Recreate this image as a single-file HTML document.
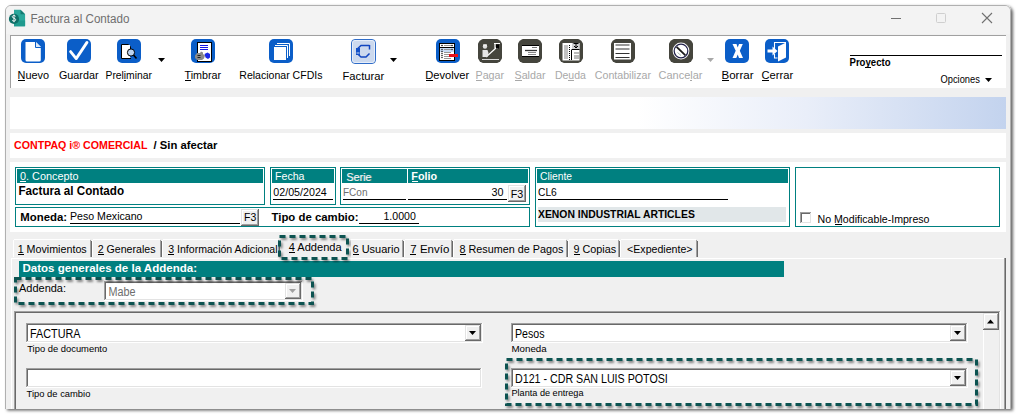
<!DOCTYPE html><html><head><meta charset="utf-8"><style>html,body{margin:0;padding:0;background:#fff;overflow:hidden}svg{display:block}text{font-family:"Liberation Sans",sans-serif}</style></head><body><svg width="1020" height="418" viewBox="0 0 1020 418" font-family="Liberation Sans, sans-serif">
<defs><filter id="sh" x="-5%" y="-20%" width="110%" height="140%"><feDropShadow dx="1.5" dy="2" stdDeviation="1.3" flood-color="#000" flood-opacity="0.45"/></filter><linearGradient id="gb" x1="0" x2="1" y1="0" y2="0"><stop offset="0" stop-color="#fff"/><stop offset="0.63" stop-color="#fff"/><stop offset="0.8" stop-color="#e9eef9"/><stop offset="1" stop-color="#c3d3ee"/></linearGradient><filter id="wsh" x="-2%" y="-2%" width="104%" height="104%"><feDropShadow dx="2" dy="1.5" stdDeviation="1.4" flood-color="#000" flood-opacity="0.6"/></filter></defs>
<rect x="0" y="0" width="1020" height="418" fill="#ffffff" />
<path d="M5 409V11a6 6 0 0 1 6-6h994a6 6 0 0 1 6 6v398z" fill="#f0f0f0" filter="url(#wsh)"/>
<path d="M5.5 409V11a5.5 5.5 0 0 1 5.5-5.5h994a5.5 5.5 0 0 1 5.5 5.5v398" fill="none" stroke="#b0b0b0" stroke-width="1"/>
<path d="M6 34V11a5 5 0 0 1 5-5h994a5 5 0 0 1 5 5v23z" fill="#f3f3f3"/>
<g transform="translate(9 9)">
<path d="M5 0.7h6.5l4.6 4.6v11.2a0.8 0.8 0 0 1-0.8 0.8H5z" fill="#2aa89c"/>
<path d="M11.5 0.7l4.6 4.6h-4.6z" fill="#157a72"/>
<rect x="5" y="11.5" width="11.1" height="5.8" fill="#1f9a8e"/>
<circle cx="5" cy="9.9" r="5.1" fill="#0f6f68"/>
<path d="M6.6 7.3c-0.4-0.6-1-0.8-1.7-0.8-0.9 0-1.6 0.5-1.6 1.3 0 1.7 3.4 1 3.4 2.9 0 0.9-0.8 1.4-1.8 1.4-0.8 0-1.4-0.3-1.8-0.9M5 5.6v7.6" fill="none" stroke="#fff" stroke-width="0.9"/>
</g>
<text x="30.5" y="23" font-size="12" font-weight="normal" fill="#6f6f6f" textLength="99" lengthAdjust="spacingAndGlyphs" >Factura al Contado</text>
<rect x="891" y="18" width="10" height="1" fill="#707070" />
<rect x="936.5" y="13.5" width="9" height="9" fill="none" stroke="#cfcfcf" rx="1"/>
<path d="M982 13l10 10M992 13l-10 10" stroke="#707070" stroke-width="1.1"/>
<rect x="10" y="35" width="996" height="53" fill="#ffffff" />
<rect x="10" y="35" width="996" height="1" fill="#a0a0a0" />
<rect x="10" y="35" width="1" height="53" fill="#a0a0a0" />
<g transform="translate(21 39)"><rect x="0" y="0" width="24" height="24" rx="5" fill="#0b5ec8"/><path d="M4.5 3h10.5l4.8 4.8v13.2a1.5 1.5 0 0 1-1.5 1.5H6a1.5 1.5 0 0 1-1.5-1.5z" fill="#fff"/><path d="M14.5 3v5.5h5.5" fill="#dde9f8" stroke="#0b5ec8" stroke-width="1"/></g><g transform="translate(67 39)"><rect x="0" y="0" width="24" height="24" rx="5" fill="#0b5ec8"/><path d="M3.6 12.6l5.6 7L20 3.4" fill="none" stroke="#fff" stroke-width="2.8" stroke-linecap="round" stroke-linejoin="round"/></g><g transform="translate(117 39)"><rect x="0" y="0" width="24" height="24" rx="5" fill="#0b5ec8"/><path d="M4.5 5.5h7l2 2v3M4.5 5.5v14h9.5" fill="#fff" stroke="#000" stroke-width="1"/><rect x="5" y="6" width="8" height="13" fill="#fff"/><circle cx="14" cy="13.5" r="3.6" fill="#bcd3f0" stroke="#000" stroke-width="1"/><path d="M16.5 16l3 3.5" stroke="#000" stroke-width="1.6"/></g><g transform="translate(191 39)"><rect x="0" y="0" width="24" height="24" rx="5" fill="#0b5ec8"/><rect x="6.5" y="3.5" width="14" height="19" fill="#fff" stroke="#000"/><path d="M9 6.5h8M9 8.5h8M9 10.5h8" stroke="#1414e6" stroke-width="1" shape-rendering="crispEdges"/><path d="M4 16.5l2-2.5h3l1-1.5 2 1v1.5l2 1.5-1 3-2 1.5h-5l-2-2z" fill="#8a8a8a"/><path d="M6.5 16.5h3M6.5 18.5h3" stroke="#222" stroke-width="1"/><path d="M13.5 15l3-1.5 2.5 1.5 0 3.5-2 1.5-2.5-1.5z" fill="#1a28e8"/></g><g transform="translate(269 39)"><rect x="0" y="0" width="24" height="24" rx="5" fill="#0b5ec8"/><path d="M8 4.5h12.5V17" fill="none" stroke="#fff" stroke-width="1"/><path d="M6 6.5h12.5V19" fill="none" stroke="#fff" stroke-width="1"/><path d="M5 8h12v13H5z" fill="#fff"/></g><g transform="translate(351 39)"><rect x="0.5" y="0.5" width="24" height="24" rx="3.5" fill="#ccd9ee" stroke="#2f6cc8"/><rect x="1.5" y="1.5" width="22" height="22" rx="2.5" fill="none" stroke="#e6eefa" stroke-width="1"/><path d="M18.5 6v4.5M18.5 6.5H10L6.2 10v4.5L10 18h5l3.5-3.5" fill="none" stroke="#1246c0" stroke-width="1.5"/><rect x="5" y="9" width="4" height="7" fill="#1250c8"/><path d="M5.5 14h3" stroke="#fff" stroke-width="0.8"/></g><g transform="translate(436 39)"><rect x="0" y="0" width="24" height="24" rx="5" fill="#0b5ec8"/><rect x="3.5" y="4.5" width="15" height="17" fill="#fff" stroke="#000"/><path d="M4 8.5h14" stroke="#000" stroke-width="1"/><rect x="4" y="9" width="14" height="4" fill="#c8dcf6"/><g fill="#000"><circle cx="6" cy="6.5" r="0.8"/><circle cx="16" cy="6.5" r="0.8"/><circle cx="6" cy="10.5" r="0.7"/><circle cx="6" cy="12.5" r="0.7"/><circle cx="6" cy="14.5" r="0.7"/><circle cx="6" cy="16.5" r="0.7"/><circle cx="6" cy="18.5" r="0.7"/><circle cx="16" cy="10.5" r="0.7"/></g><path d="M8 6.5h7M8 10.5h7M8 13.5h7M8 15.5h7M8 17.5h7M8 19.5h7" stroke="#8a8a8a" stroke-width="0.9"/><rect x="13" y="15" width="9" height="3" fill="#e8101a"/></g><g transform="translate(478 39)"><path d="M5 0h14l5 5v14l-5 5H5l-5-5V5z" fill="#45453d"/><rect x="0" y="0" width="24" height="24" rx="6" fill="#45453d"/><path d="M4 20.5h17" stroke="#d8d8d8" stroke-width="1"/><path d="M8 18l10-9" stroke="#fff" stroke-width="1.2"/><circle cx="7" cy="7.5" r="2.2" fill="#e0e0e0"/><path d="M5 6h4" stroke="#fff"/><path d="M4.5 11h5l1 3-1 4H4.5z" fill="#e6e6e6"/><path d="M16 4.5h6M17 5v4h3" fill="none" stroke="#fff" stroke-width="1.2"/><path d="M18 5.5h3v4h-3z" fill="#000"/></g><g transform="translate(518 39)"><path d="M5 0h14l5 5v14l-5 5H5l-5-5V5z" fill="#45453d"/><rect x="0" y="0" width="24" height="24" rx="6" fill="#45453d"/><rect x="4" y="6" width="17" height="12" fill="#fff"/><path d="M4 6.5h17M4 17.5h17" stroke="#000"/><path d="M14 8.5h5" stroke="#777"/><path d="M7 11.5h12" stroke="#333" stroke-width="1.3"/><path d="M10 13.5h8M10 15.5h8" stroke="#888"/></g><g transform="translate(559 39)"><path d="M5 0h14l5 5v14l-5 5H5l-5-5V5z" fill="#45453d"/><rect x="0" y="0" width="24" height="24" rx="6" fill="#45453d"/><rect x="3.5" y="4" width="17" height="17.5" fill="#fff"/><rect x="13" y="4" width="7.5" height="6" fill="#d0d0d0"/><path d="M5 7h4M5 9h4M5 11h4M5 13h4M5 15h4M5 17h4M5 19h4" stroke="#777" stroke-width="0.9"/><path d="M10.5 6v15" stroke="#000" stroke-dasharray="1 1"/><path d="M12.5 11v10M12.5 10.5h8" stroke="#000"/><path d="M15 14h5M15 17h5M15 19h5" stroke="#777"/><path d="M17 4.5v4M15 7l2 2 2-2" stroke="#000" fill="none"/><path d="M14.5 4.5h5" stroke="#000"/></g><g transform="translate(611 39)"><path d="M5 0h14l5 5v14l-5 5H5l-5-5V5z" fill="#45453d"/><rect x="0" y="0" width="24" height="24" rx="6" fill="#45453d"/><rect x="3" y="4" width="17" height="16.5" fill="#fff"/><path d="M4.5 6h14" stroke="#999" stroke-width="2"/><path d="M4.5 10h14M4.5 14.5h14M4.5 18.5h14" stroke="#333" stroke-width="1.2"/></g><g transform="translate(669 39)"><path d="M5 0h14l5 5v14l-5 5H5l-5-5V5z" fill="#45453d"/><rect x="0" y="0" width="24" height="24" rx="6" fill="#45453d"/><circle cx="12" cy="12" r="8.4" fill="#f4f4f4"/><circle cx="12" cy="12" r="6.8" fill="#fff" stroke="#20204a" stroke-width="1.2"/><path d="M7.6 7.8l8.8 8.6" stroke="#1a1a1a" stroke-width="1.8"/><path d="M8.5 13.5l3.5 3" stroke="#a8b8b0" stroke-width="1"/></g><g transform="translate(725 39)"><rect x="0" y="0" width="24" height="24" rx="5" fill="#0b5ec8"/><path d="M7.5 5h4l1.2 3.5L14 5h3.8l-3 6.8 3.2 7.2h-4l-1.3-3.6-1.4 3.6H7.5l3.2-7.2z" fill="#fff"/></g><g transform="translate(765 39)"><rect x="0" y="0" width="24" height="24" rx="5" fill="#0b5ec8"/><path d="M9.5 10V3.5H21" fill="none" stroke="#fff" stroke-width="1.1"/><path d="M9.5 15v4h3" fill="none" stroke="#fff" stroke-width="1.1"/><path d="M13 7.5l8-4v15l-8 4z" fill="#fff"/><path d="M2.5 10.5h5v-3l5 4.5-5 4.5v-3h-5z" fill="#fff"/></g>
<text x="17.6" y="78.8" font-size="11" font-weight="normal" fill="#000" textLength="31.5" lengthAdjust="spacingAndGlyphs" >Nuevo</text>
<text x="59.0" y="78.8" font-size="11" font-weight="normal" fill="#000" textLength="39.5" lengthAdjust="spacingAndGlyphs" >Guardar</text>
<text x="105.5" y="78.8" font-size="11" font-weight="normal" fill="#000" textLength="46.4" lengthAdjust="spacingAndGlyphs" >Preliminar</text>
<text x="184.5" y="78.8" font-size="11" font-weight="normal" fill="#000" textLength="36.6" lengthAdjust="spacingAndGlyphs" >Timbrar</text>
<text x="239.3" y="78.8" font-size="11" font-weight="normal" fill="#000" textLength="83.2" lengthAdjust="spacingAndGlyphs" >Relacionar CFDIs</text>
<text x="342.5" y="80" font-size="11" font-weight="normal" fill="#000" textLength="41.7" lengthAdjust="spacingAndGlyphs" >Facturar</text>
<text x="425.3" y="78.8" font-size="11" font-weight="normal" fill="#000" textLength="43.9" lengthAdjust="spacingAndGlyphs" >Devolver</text>
<text x="475.5" y="78.8" font-size="11" font-weight="normal" fill="#a8a8a8" textLength="28.6" lengthAdjust="spacingAndGlyphs" >Pagar</text>
<text x="514.5" y="78.8" font-size="11" font-weight="normal" fill="#a8a8a8" textLength="31" lengthAdjust="spacingAndGlyphs" >Saldar</text>
<text x="554.9" y="78.8" font-size="11" font-weight="normal" fill="#a8a8a8" textLength="31" lengthAdjust="spacingAndGlyphs" >Deuda</text>
<text x="594.8" y="78.8" font-size="11" font-weight="normal" fill="#a8a8a8" textLength="56.2" lengthAdjust="spacingAndGlyphs" >Contabilizar</text>
<text x="658.5" y="78.8" font-size="11" font-weight="normal" fill="#a8a8a8" textLength="44" lengthAdjust="spacingAndGlyphs" >Cancelar</text>
<text x="721.5" y="78.8" font-size="11" font-weight="normal" fill="#000" textLength="32" lengthAdjust="spacingAndGlyphs" >Borrar</text>
<text x="761.5" y="78.8" font-size="11" font-weight="normal" fill="#000" textLength="31.6" lengthAdjust="spacingAndGlyphs" >Cerrar</text>
<rect x="18" y="80" width="7" height="1" fill="#000" />
<rect x="124" y="80" width="2" height="1" fill="#000" />
<rect x="185" y="80" width="6" height="1" fill="#000" />
<rect x="426" y="80" width="7" height="1" fill="#000" />
<rect x="476" y="80" width="6" height="1" fill="#a8a8a8" />
<rect x="515" y="80" width="7" height="1" fill="#a8a8a8" />
<rect x="568" y="80" width="6" height="1" fill="#a8a8a8" />
<rect x="690" y="80" width="2" height="1" fill="#a8a8a8" />
<rect x="722" y="80" width="7" height="1" fill="#000" />
<rect x="762" y="80" width="7" height="1" fill="#000" />
<path d="M158.0 58h7l-3.5 4z" fill="#000"/>
<path d="M390.0 58h7l-3.5 4z" fill="#000"/>
<path d="M707.0 58h7l-3.5 4z" fill="#a8a8a8"/>
<rect x="850" y="55" width="152" height="1" fill="#000" />
<text x="849.5" y="66" font-size="10" font-weight="bold" fill="#000" textLength="41" lengthAdjust="spacingAndGlyphs" >Proyecto</text>
<rect x="865" y="67" width="6" height="1" fill="#000" />
<text x="940.5" y="83" font-size="11" font-weight="normal" fill="#000" textLength="39.4" lengthAdjust="spacingAndGlyphs" >Opciones</text>
<path d="M985.0 78h7l-3.5 4z" fill="#000"/>
<rect x="10" y="97" width="996" height="32" fill="url(#gb)" />
<rect x="10" y="133" width="996" height="25" fill="#ffffff" />
<text x="14" y="149" font-size="11" font-weight="bold" fill="#ff0000" textLength="133.5" lengthAdjust="spacingAndGlyphs" >CONTPAQ i® COMERCIAL</text>
<text x="153.5" y="149" font-size="11" font-weight="bold" fill="#000" textLength="64" lengthAdjust="spacingAndGlyphs" >/ Sin afectar</text>
<rect x="10" y="162" width="996" height="70" fill="#ffffff" />
<rect x="15.5" y="167.5" width="249" height="37" fill="#fff" stroke="#008080"/>
<rect x="17" y="169" width="246" height="14" fill="#008080" />
<text x="20" y="180" font-size="11" font-weight="normal" fill="#fff" textLength="58.5" lengthAdjust="spacingAndGlyphs" >0. Concepto</text>
<rect x="20" y="181" width="6" height="1" fill="#fff" />
<text x="18.5" y="195" font-size="12" font-weight="bold" fill="#000" textLength="105.5" lengthAdjust="spacingAndGlyphs" >Factura al Contado</text>
<rect x="15.5" y="207.5" width="514" height="19" fill="#fff" stroke="#008080"/>
<text x="20.3" y="220.5" font-size="11" font-weight="bold" fill="#000" textLength="46.8" lengthAdjust="spacingAndGlyphs" >Moneda:</text>
<text x="70" y="220" font-size="11" font-weight="normal" fill="#000" textLength="72.5" lengthAdjust="spacingAndGlyphs" >Peso Mexicano</text>
<rect x="70" y="223" width="170" height="1" fill="#000" />
<rect x="241" y="209" width="18" height="17" fill="#f0f0f0" />
<rect x="241" y="209" width="18" height="1" fill="#e3e3e3" />
<rect x="241" y="209" width="1" height="17" fill="#e3e3e3" />
<rect x="242" y="210" width="16" height="1" fill="#ffffff" />
<rect x="242" y="210" width="1" height="15" fill="#ffffff" />
<rect x="241" y="225" width="18" height="1" fill="#696969" />
<rect x="258" y="209" width="1" height="17" fill="#696969" />
<rect x="242" y="224" width="16" height="1" fill="#a0a0a0" />
<rect x="257" y="210" width="1" height="15" fill="#a0a0a0" />
<text x="244" y="221" font-size="11" font-weight="normal" fill="#000" textLength="12.2" lengthAdjust="spacingAndGlyphs" >F3</text>
<text x="271.5" y="221.2" font-size="11" font-weight="bold" fill="#000" textLength="87" lengthAdjust="spacingAndGlyphs" >Tipo de cambio:</text>
<rect x="359" y="223" width="60" height="1" fill="#000" />
<text x="383.5" y="220" font-size="11" font-weight="normal" fill="#000" textLength="32.3" lengthAdjust="spacingAndGlyphs" >1.0000</text>
<rect x="270.5" y="167.5" width="65" height="37" fill="#fff" stroke="#008080"/>
<rect x="272" y="169" width="62" height="14" fill="#008080" />
<text x="275" y="180" font-size="11" font-weight="normal" fill="#fff" textLength="29.5" lengthAdjust="spacingAndGlyphs" >Fecha</text>
<text x="273.3" y="195.5" font-size="11" font-weight="normal" fill="#000" textLength="53.5" lengthAdjust="spacingAndGlyphs" >02/05/2024</text>
<rect x="273" y="199" width="60" height="1" fill="#000" />
<rect x="340.5" y="167.5" width="189" height="37" fill="#fff" stroke="#008080"/>
<rect x="342" y="169" width="65" height="14" fill="#008080" />
<rect x="408" y="169" width="120" height="14" fill="#008080" />
<text x="347.2" y="181.2" font-size="11" font-weight="normal" fill="#7fa8a8" textLength="25" lengthAdjust="spacingAndGlyphs" >Serie</text>
<text x="346.3" y="180.5" font-size="11" font-weight="normal" fill="#f4f8f8" textLength="25" lengthAdjust="spacingAndGlyphs" >Serie</text>
<text x="343" y="195.5" font-size="11" font-weight="normal" fill="#6d6d6d" textLength="24.5" lengthAdjust="spacingAndGlyphs" >FCon</text>
<rect x="343" y="199" width="63" height="1" fill="#000" />
<text x="411.3" y="180" font-size="11" font-weight="bold" fill="#fff" textLength="25.8" lengthAdjust="spacingAndGlyphs" >Folio</text>
<rect x="412" y="181" width="6" height="1" fill="#fff" />
<text x="491.5" y="195.5" font-size="11" font-weight="normal" fill="#000" textLength="12" lengthAdjust="spacingAndGlyphs" >30</text>
<rect x="408" y="199" width="99" height="1" fill="#000" />
<rect x="508" y="185" width="18" height="17" fill="#f0f0f0" />
<rect x="508" y="185" width="18" height="1" fill="#e3e3e3" />
<rect x="508" y="185" width="1" height="17" fill="#e3e3e3" />
<rect x="509" y="186" width="16" height="1" fill="#ffffff" />
<rect x="509" y="186" width="1" height="15" fill="#ffffff" />
<rect x="508" y="201" width="18" height="1" fill="#696969" />
<rect x="525" y="185" width="1" height="17" fill="#696969" />
<rect x="509" y="200" width="16" height="1" fill="#a0a0a0" />
<rect x="524" y="186" width="1" height="15" fill="#a0a0a0" />
<text x="510.8" y="197.5" font-size="11" font-weight="normal" fill="#000" textLength="12.5" lengthAdjust="spacingAndGlyphs" >F3</text>
<rect x="535.5" y="167.5" width="254" height="59" fill="#fff" stroke="#008080"/>
<rect x="537" y="169" width="251" height="14" fill="#008080" />
<text x="540" y="180" font-size="11" font-weight="normal" fill="#fff" textLength="32" lengthAdjust="spacingAndGlyphs" >Cliente</text>
<text x="538" y="196" font-size="11" font-weight="normal" fill="#000" textLength="18.8" lengthAdjust="spacingAndGlyphs" >CL6</text>
<rect x="538" y="199" width="190" height="1" fill="#000" />
<rect x="538" y="207" width="248" height="15" fill="#e1e7e9" />
<text x="538" y="217.6" font-size="11" font-weight="bold" fill="#000" textLength="156.8" lengthAdjust="spacingAndGlyphs" >XENON INDUSTRIAL ARTICLES</text>
<rect x="795.5" y="167.5" width="204" height="59" fill="#fff" stroke="#008080"/>
<rect x="800" y="212" width="12" height="12" fill="#fff" />
<rect x="800" y="212" width="12" height="1" fill="#a0a0a0" />
<rect x="800" y="212" width="1" height="12" fill="#a0a0a0" />
<rect x="801" y="213" width="10" height="1" fill="#696969" />
<rect x="801" y="213" width="1" height="10" fill="#696969" />
<rect x="800" y="223" width="12" height="1" fill="#ffffff" />
<rect x="811" y="212" width="1" height="12" fill="#ffffff" />
<rect x="801" y="222" width="10" height="1" fill="#e3e3e3" />
<rect x="810" y="213" width="1" height="10" fill="#e3e3e3" />
<text x="817.5" y="223" font-size="11" font-weight="normal" fill="#000" textLength="112" lengthAdjust="spacingAndGlyphs" >No Modificable-Impreso</text>
<rect x="835" y="224" width="7" height="1" fill="#000" />
<rect x="13" y="239" width="79" height="18" fill="#f0f0f0" />
<rect x="14" y="239" width="76" height="1" fill="#ffffff" />
<rect x="13" y="240" width="1" height="17" fill="#ffffff" />
<rect x="90" y="240" width="1" height="17" fill="#a0a0a0" />
<rect x="91" y="241" width="1" height="16" fill="#696969" />
<text x="17.7" y="252.6" font-size="11" font-weight="normal" fill="#000" textLength="69" lengthAdjust="spacingAndGlyphs" >1 Movimientos</text>
<rect x="18" y="254" width="6" height="1" fill="#000" />
<rect x="92" y="239" width="70" height="18" fill="#f0f0f0" />
<rect x="93" y="239" width="67" height="1" fill="#ffffff" />
<rect x="92" y="240" width="1" height="17" fill="#ffffff" />
<rect x="160" y="240" width="1" height="17" fill="#a0a0a0" />
<rect x="161" y="241" width="1" height="16" fill="#696969" />
<text x="97.7" y="252.6" font-size="11" font-weight="normal" fill="#000" textLength="57.8" lengthAdjust="spacingAndGlyphs" >2 Generales</text>
<rect x="98" y="254" width="6" height="1" fill="#000" />
<rect x="162" y="239" width="118" height="18" fill="#f0f0f0" />
<rect x="163" y="239" width="115" height="1" fill="#ffffff" />
<rect x="162" y="240" width="1" height="17" fill="#ffffff" />
<rect x="278" y="240" width="1" height="17" fill="#a0a0a0" />
<rect x="279" y="241" width="1" height="16" fill="#696969" />
<text x="168.2" y="252.6" font-size="11" font-weight="normal" fill="#000" textLength="109.3" lengthAdjust="spacingAndGlyphs" >3 Información Adicional</text>
<rect x="168" y="254" width="6" height="1" fill="#000" />
<rect x="349" y="239" width="55" height="18" fill="#f0f0f0" />
<rect x="350" y="239" width="52" height="1" fill="#ffffff" />
<rect x="349" y="240" width="1" height="17" fill="#ffffff" />
<rect x="402" y="240" width="1" height="17" fill="#a0a0a0" />
<rect x="403" y="241" width="1" height="16" fill="#696969" />
<text x="352.5" y="252.6" font-size="11" font-weight="normal" fill="#000" textLength="47" lengthAdjust="spacingAndGlyphs" >6 Usuario</text>
<rect x="353" y="254" width="6" height="1" fill="#000" />
<rect x="404" y="239" width="49" height="18" fill="#f0f0f0" />
<rect x="405" y="239" width="46" height="1" fill="#ffffff" />
<rect x="404" y="240" width="1" height="17" fill="#ffffff" />
<rect x="451" y="240" width="1" height="17" fill="#a0a0a0" />
<rect x="452" y="241" width="1" height="16" fill="#696969" />
<text x="410.3" y="252.6" font-size="11" font-weight="normal" fill="#000" textLength="39" lengthAdjust="spacingAndGlyphs" >7 Envío</text>
<rect x="410" y="254" width="6" height="1" fill="#000" />
<rect x="453" y="239" width="115" height="18" fill="#f0f0f0" />
<rect x="454" y="239" width="112" height="1" fill="#ffffff" />
<rect x="453" y="240" width="1" height="17" fill="#ffffff" />
<rect x="566" y="240" width="1" height="17" fill="#a0a0a0" />
<rect x="567" y="241" width="1" height="16" fill="#696969" />
<text x="459.5" y="252.6" font-size="11" font-weight="normal" fill="#000" textLength="103.8" lengthAdjust="spacingAndGlyphs" >8 Resumen de Pagos</text>
<rect x="460" y="254" width="6" height="1" fill="#000" />
<rect x="568" y="239" width="52" height="18" fill="#f0f0f0" />
<rect x="569" y="239" width="49" height="1" fill="#ffffff" />
<rect x="568" y="240" width="1" height="17" fill="#ffffff" />
<rect x="618" y="240" width="1" height="17" fill="#a0a0a0" />
<rect x="619" y="241" width="1" height="16" fill="#696969" />
<text x="573.5" y="252.6" font-size="11" font-weight="normal" fill="#000" textLength="42.7" lengthAdjust="spacingAndGlyphs" >9 Copias</text>
<rect x="574" y="254" width="6" height="1" fill="#000" />
<rect x="620" y="239" width="78" height="18" fill="#f0f0f0" />
<rect x="621" y="239" width="75" height="1" fill="#ffffff" />
<rect x="620" y="240" width="1" height="17" fill="#ffffff" />
<rect x="696" y="240" width="1" height="17" fill="#a0a0a0" />
<rect x="697" y="241" width="1" height="16" fill="#696969" />
<text x="627.1" y="252.6" font-size="11" font-weight="normal" fill="#000" textLength="65.4" lengthAdjust="spacingAndGlyphs" >&lt;Expediente&gt;</text>
<rect x="280" y="237" width="67" height="21" fill="#f0f0f0" />
<text x="288.7" y="250.8" font-size="11" font-weight="normal" fill="#000" textLength="53" lengthAdjust="spacingAndGlyphs" >4 Addenda</text>
<rect x="289" y="252" width="6" height="1" fill="#000" />
<rect x="11" y="257" width="995" height="152" fill="#f0f0f0" />
<rect x="11" y="258" width="995" height="1" fill="#ffffff" />
<rect x="11" y="258" width="1" height="151" fill="#ffffff" />
<rect x="1004" y="258" width="1" height="151" fill="#a0a0a0" />
<rect x="1005" y="258" width="1" height="151" fill="#696969" />
<rect x="19" y="261" width="765" height="16" fill="#008080" />
<text x="22.5" y="272.2" font-size="11" font-weight="bold" fill="#fff" textLength="174.5" lengthAdjust="spacingAndGlyphs" >Datos generales de la Addenda:</text>
<text x="19" y="291.7" font-size="11" font-weight="normal" fill="#000" textLength="47" lengthAdjust="spacingAndGlyphs" >Addenda:</text>
<rect x="104" y="281" width="199" height="20" fill="#fff" />
<rect x="104" y="281" width="199" height="1" fill="#a0a0a0" />
<rect x="104" y="281" width="1" height="20" fill="#a0a0a0" />
<rect x="105" y="282" width="197" height="1" fill="#696969" />
<rect x="105" y="282" width="1" height="18" fill="#696969" />
<rect x="104" y="300" width="199" height="1" fill="#ffffff" />
<rect x="302" y="281" width="1" height="20" fill="#ffffff" />
<rect x="105" y="299" width="197" height="1" fill="#e3e3e3" />
<rect x="301" y="282" width="1" height="18" fill="#e3e3e3" />
<rect x="285" y="283" width="16" height="16" fill="#f0f0f0" />
<rect x="285" y="283" width="16" height="1" fill="#e3e3e3" />
<rect x="285" y="283" width="1" height="16" fill="#e3e3e3" />
<rect x="286" y="284" width="14" height="1" fill="#ffffff" />
<rect x="286" y="284" width="1" height="14" fill="#ffffff" />
<rect x="285" y="298" width="16" height="1" fill="#696969" />
<rect x="300" y="283" width="1" height="16" fill="#696969" />
<rect x="286" y="297" width="14" height="1" fill="#a0a0a0" />
<rect x="299" y="284" width="1" height="14" fill="#a0a0a0" />
<path d="M289.0 289.0h7l-3.5 4z" fill="#a0a0a0"/>
<text x="108.5" y="296" font-size="12" font-weight="normal" fill="#6d6d6d" textLength="27" lengthAdjust="spacingAndGlyphs" >Mabe</text>
<rect x="14" y="311" width="987" height="98" fill="#f0f0f0" />
<rect x="14" y="311" width="987" height="1" fill="#a0a0a0" />
<rect x="14" y="311" width="1" height="98" fill="#a0a0a0" />
<rect x="15" y="312" width="985" height="1" fill="#696969" />
<rect x="15" y="312" width="1" height="97" fill="#696969" />
<rect x="1000" y="311" width="1" height="98" fill="#ffffff" />
<rect x="999" y="312" width="1" height="97" fill="#e3e3e3" />
<rect x="983" y="313" width="16" height="96" fill="#f0f0f0" />
<rect x="983" y="330" width="1" height="79" fill="#ffffff" />
<rect x="983" y="313" width="16" height="17" fill="#f0f0f0" />
<rect x="983" y="313" width="16" height="1" fill="#e3e3e3" />
<rect x="983" y="313" width="1" height="17" fill="#e3e3e3" />
<rect x="984" y="314" width="14" height="1" fill="#ffffff" />
<rect x="984" y="314" width="1" height="15" fill="#ffffff" />
<rect x="983" y="329" width="16" height="1" fill="#696969" />
<rect x="998" y="313" width="1" height="17" fill="#696969" />
<rect x="984" y="328" width="14" height="1" fill="#a0a0a0" />
<rect x="997" y="314" width="1" height="15" fill="#a0a0a0" />
<path d="M987.0 323.5h7l-3.5 -4z" fill="#000"/>
<rect x="26" y="323" width="457" height="20" fill="#fff" />
<rect x="26" y="323" width="457" height="1" fill="#a0a0a0" />
<rect x="26" y="323" width="1" height="20" fill="#a0a0a0" />
<rect x="27" y="324" width="455" height="1" fill="#696969" />
<rect x="27" y="324" width="1" height="18" fill="#696969" />
<rect x="26" y="342" width="457" height="1" fill="#ffffff" />
<rect x="482" y="323" width="1" height="20" fill="#ffffff" />
<rect x="27" y="341" width="455" height="1" fill="#e3e3e3" />
<rect x="481" y="324" width="1" height="18" fill="#e3e3e3" />
<rect x="465" y="325" width="16" height="16" fill="#f0f0f0" />
<rect x="465" y="325" width="16" height="1" fill="#e3e3e3" />
<rect x="465" y="325" width="1" height="16" fill="#e3e3e3" />
<rect x="466" y="326" width="14" height="1" fill="#ffffff" />
<rect x="466" y="326" width="1" height="14" fill="#ffffff" />
<rect x="465" y="340" width="16" height="1" fill="#696969" />
<rect x="480" y="325" width="1" height="16" fill="#696969" />
<rect x="466" y="339" width="14" height="1" fill="#a0a0a0" />
<rect x="479" y="326" width="1" height="14" fill="#a0a0a0" />
<path d="M469.0 331.0h7l-3.5 4z" fill="#000"/>
<text x="30" y="338" font-size="12" font-weight="normal" fill="#000" textLength="50.5" lengthAdjust="spacingAndGlyphs" >FACTURA</text>
<text x="27.2" y="351.8" font-size="9" font-weight="normal" fill="#000" textLength="80" lengthAdjust="spacingAndGlyphs" >Tipo de documento</text>
<rect x="511" y="323" width="457" height="20" fill="#fff" />
<rect x="511" y="323" width="457" height="1" fill="#a0a0a0" />
<rect x="511" y="323" width="1" height="20" fill="#a0a0a0" />
<rect x="512" y="324" width="455" height="1" fill="#696969" />
<rect x="512" y="324" width="1" height="18" fill="#696969" />
<rect x="511" y="342" width="457" height="1" fill="#ffffff" />
<rect x="967" y="323" width="1" height="20" fill="#ffffff" />
<rect x="512" y="341" width="455" height="1" fill="#e3e3e3" />
<rect x="966" y="324" width="1" height="18" fill="#e3e3e3" />
<rect x="950" y="325" width="16" height="16" fill="#f0f0f0" />
<rect x="950" y="325" width="16" height="1" fill="#e3e3e3" />
<rect x="950" y="325" width="1" height="16" fill="#e3e3e3" />
<rect x="951" y="326" width="14" height="1" fill="#ffffff" />
<rect x="951" y="326" width="1" height="14" fill="#ffffff" />
<rect x="950" y="340" width="16" height="1" fill="#696969" />
<rect x="965" y="325" width="1" height="16" fill="#696969" />
<rect x="951" y="339" width="14" height="1" fill="#a0a0a0" />
<rect x="964" y="326" width="1" height="14" fill="#a0a0a0" />
<path d="M954.0 331.0h7l-3.5 4z" fill="#000"/>
<text x="515" y="338.2" font-size="12" font-weight="normal" fill="#000" textLength="29.5" lengthAdjust="spacingAndGlyphs" >Pesos</text>
<text x="511.5" y="351.6" font-size="9" font-weight="normal" fill="#000" textLength="35.2" lengthAdjust="spacingAndGlyphs" >Moneda</text>
<rect x="26" y="368" width="456" height="20" fill="#fff" />
<rect x="26" y="368" width="456" height="1" fill="#a0a0a0" />
<rect x="26" y="368" width="1" height="20" fill="#a0a0a0" />
<rect x="27" y="369" width="454" height="1" fill="#696969" />
<rect x="27" y="369" width="1" height="18" fill="#696969" />
<rect x="26" y="387" width="456" height="1" fill="#ffffff" />
<rect x="481" y="368" width="1" height="20" fill="#ffffff" />
<rect x="27" y="386" width="454" height="1" fill="#e3e3e3" />
<rect x="480" y="369" width="1" height="18" fill="#e3e3e3" />
<text x="26.6" y="396.9" font-size="9" font-weight="normal" fill="#000" textLength="63.8" lengthAdjust="spacingAndGlyphs" >Tipo de cambio</text>
<rect x="511" y="368" width="457" height="20" fill="#fff" />
<rect x="511" y="368" width="457" height="1" fill="#a0a0a0" />
<rect x="511" y="368" width="1" height="20" fill="#a0a0a0" />
<rect x="512" y="369" width="455" height="1" fill="#696969" />
<rect x="512" y="369" width="1" height="18" fill="#696969" />
<rect x="511" y="387" width="457" height="1" fill="#ffffff" />
<rect x="967" y="368" width="1" height="20" fill="#ffffff" />
<rect x="512" y="386" width="455" height="1" fill="#e3e3e3" />
<rect x="966" y="369" width="1" height="18" fill="#e3e3e3" />
<rect x="950" y="370" width="16" height="16" fill="#f0f0f0" />
<rect x="950" y="370" width="16" height="1" fill="#e3e3e3" />
<rect x="950" y="370" width="1" height="16" fill="#e3e3e3" />
<rect x="951" y="371" width="14" height="1" fill="#ffffff" />
<rect x="951" y="371" width="1" height="14" fill="#ffffff" />
<rect x="950" y="385" width="16" height="1" fill="#696969" />
<rect x="965" y="370" width="1" height="16" fill="#696969" />
<rect x="951" y="384" width="14" height="1" fill="#a0a0a0" />
<rect x="964" y="371" width="1" height="14" fill="#a0a0a0" />
<path d="M954.0 376.0h7l-3.5 4z" fill="#000"/>
<text x="515" y="383.2" font-size="12" font-weight="normal" fill="#000" textLength="152.8" lengthAdjust="spacingAndGlyphs" >D121 - CDR SAN LUIS POTOSI</text>
<text x="511.5" y="396.3" font-size="9" font-weight="normal" fill="#000" textLength="72" lengthAdjust="spacingAndGlyphs" >Planta de entrega</text>
<rect x="279.5" y="236.5" width="68" height="22" fill="none" stroke="#0d5351" stroke-width="3" stroke-dasharray="6 4" filter="url(#sh)"/>
<rect x="15.5" y="278.5" width="297" height="25" fill="none" stroke="#0d5351" stroke-width="3" stroke-dasharray="6 4" filter="url(#sh)"/>
<rect x="506.5" y="359.5" width="470" height="45" fill="none" stroke="#0d5351" stroke-width="3" stroke-dasharray="6 4" filter="url(#sh)"/>
</svg></body></html>
